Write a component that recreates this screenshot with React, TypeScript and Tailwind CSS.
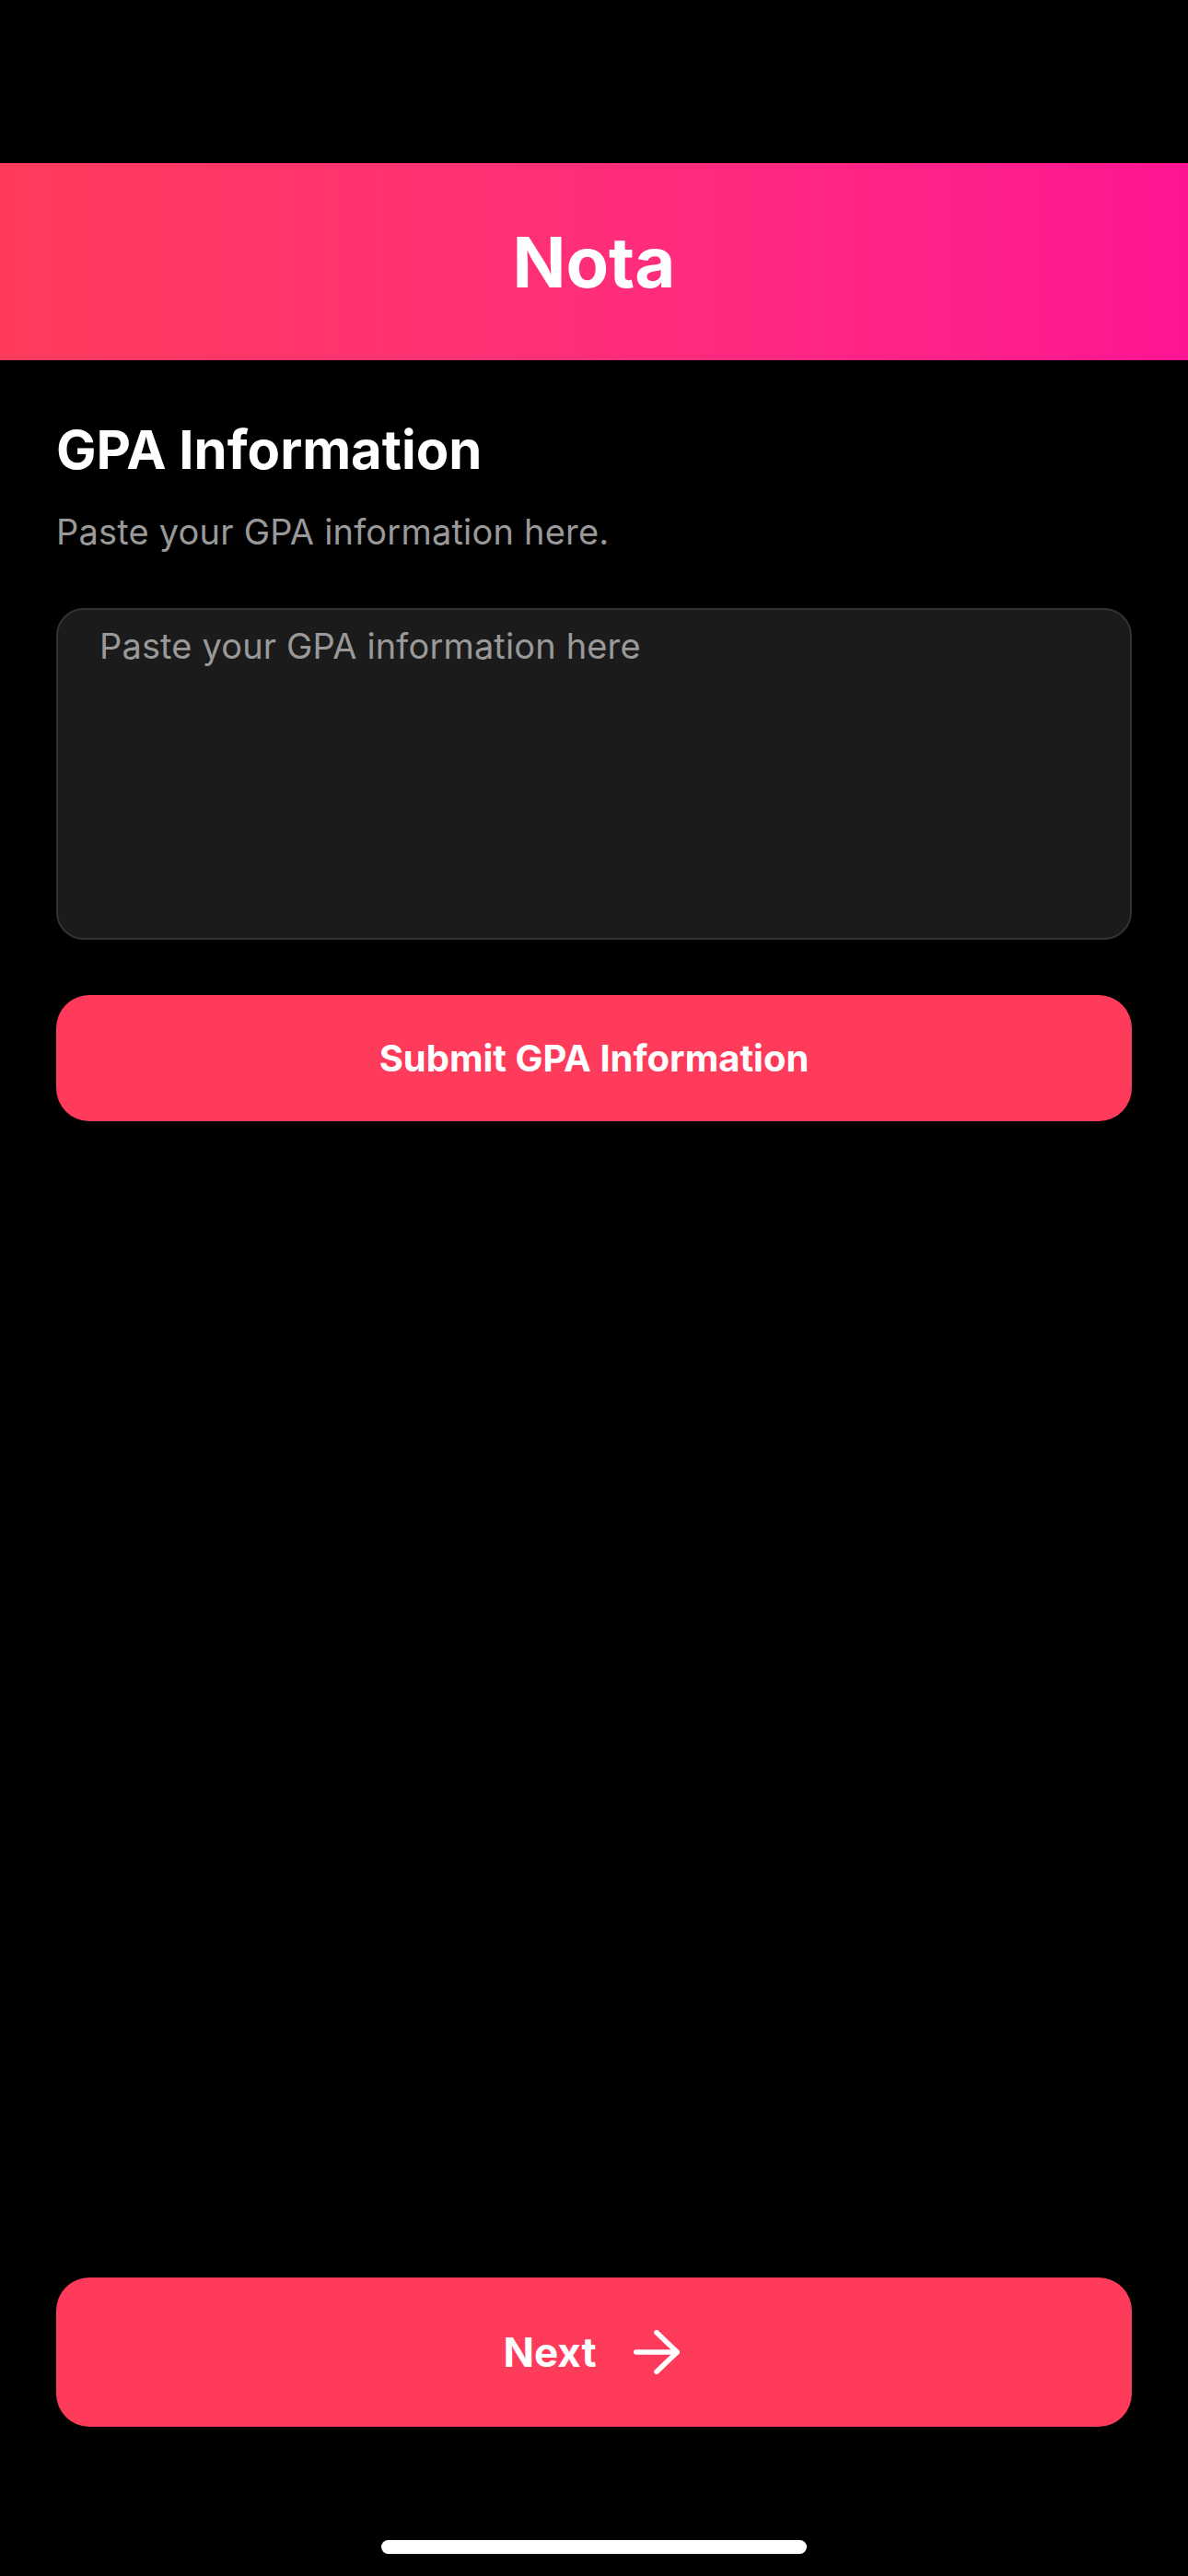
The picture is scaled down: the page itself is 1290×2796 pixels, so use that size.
import React from 'react';

export default function App() {
  return (
    <div className="min-h-[2796px] w-full bg-black flex flex-col font-['Inter','Liberation_Sans',sans-serif]">
      {/* Status bar space */}
      <div className="h-[177px] shrink-0" />

      {/* Header */}
      <header className="h-[214px] shrink-0 flex items-center justify-center bg-linear-to-r from-[#ff3b5c] to-[#ff1493]">
        <h1 className="text-[76px] leading-[92px] font-bold text-white">Nota</h1>
      </header>

      {/* Content */}
      <main className="flex-1 flex flex-col px-[61px]">
        <h2 className="mt-[62px] text-[58px] leading-[70px] font-bold text-white">GPA Information</h2>
        <p className="mt-[32px] text-[38px] leading-[44px] tracking-[0.2px] text-[#999999]">Paste your GPA information here.</p>

        {/* GPA textarea */}
        <textarea
          name="gpa"
          placeholder="Paste your GPA information here"
          className="mt-[61px] h-[360px] w-full resize-none rounded-[30px] border-2 border-[#333333] bg-[#1b1b1b] px-[45px] pt-[16px] text-[38px] leading-[46px] tracking-[0.15px] text-white placeholder:text-[#999999] focus:outline-none"
        ></textarea>

        {/* Submit */}
        <button className="mt-[60px] h-[137px] w-full rounded-[36px] bg-[#ff3b5c] text-[40px] font-bold text-white">
          Submit GPA Information
        </button>

        <div className="flex-1" />

        {/* Next */}
        <button className="h-[162px] w-full rounded-[36px] bg-[#ff3b5c] flex items-center justify-center gap-[40px] pr-[6px] text-[44px] font-bold text-white">
          <span>Next</span>
          <svg width="50" height="48" viewBox="0 0 50 48" fill="none" stroke="white" strokeWidth="5.5" strokeLinecap="round" strokeLinejoin="round">
            <path d="M2.75 24H47.25" />
            <path d="M25 2.75L47.25 24L25 45.25" />
          </svg>
        </button>

        {/* Home indicator */}
        <div className="h-[162px] flex justify-center pt-[123px]">
          <div className="h-[15px] w-[462px] rounded-full bg-white" />
        </div>
      </main>
    </div>
  );
}
